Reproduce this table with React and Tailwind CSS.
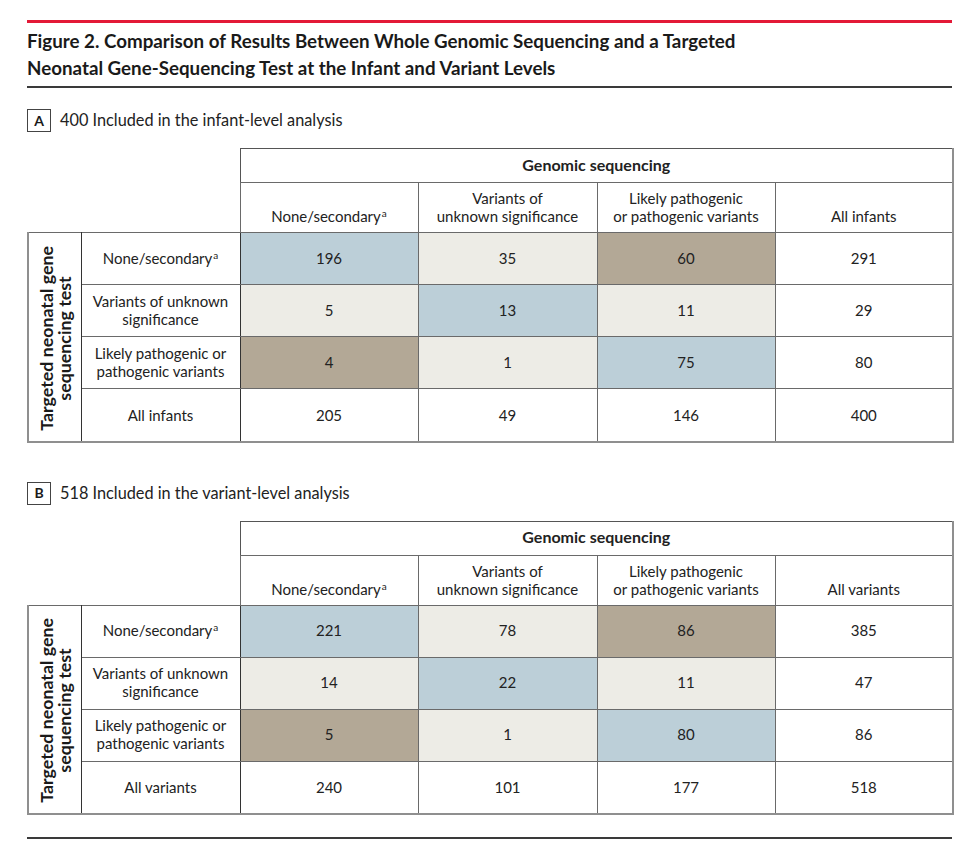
import React from 'react';

const FONT = { fontFamily: 'Lato, "Noto Sans", sans-serif' };

const COLORS = {
  b: 'bg-[#bccfd8]',
  l: 'bg-[#edece6]',
  t: 'bg-[#b3a896]',
  w: 'bg-white',
};

const IN = 'border border-[#6a6a6a]';

function Sup() {
  return <sup className="text-[10px] relative -top-[5px] ml-[1px] align-baseline">a</sup>;
}

function Panel({ letter, label, allLabel, rows, totals }) {
  const rowLabels = [
    <>None/secondary<Sup /></>,
    <>Variants of unknown<br />significance</>,
    <>Likely pathogenic or<br />pathogenic variants</>,
  ];
  return (
    <div>
      <div className="flex items-center h-[23px]">
        <div className="w-[24px] h-[23px] border border-[#444] flex items-center justify-center font-bold text-[14px] leading-none">
          {letter}
        </div>
        <div className="ml-[9px] text-[16.3px] leading-none text-[#222]">{label}</div>
      </div>
      <table className="mt-[16px] w-[925px] table-fixed border-collapse text-[15px] text-[#222] leading-[18px]">
        <colgroup>
          <col className="w-[53px]" />
          <col className="w-[159px]" />
          <col className="w-[178px]" />
          <col className="w-[179px]" />
          <col className="w-[178px]" />
          <col className="w-[178px]" />
        </colgroup>
        <tbody>
          <tr className="h-[34px]">
            <td colSpan={2} className="p-0"></td>
            <th
              colSpan={4}
              className="border-t border-l border-b border-t-[#555] border-l-[#555] border-b-[#6a6a6a] border-r-2 border-r-[#8f8f8f] font-bold text-[16px] text-center align-middle p-0 pb-[2px]"
            >
              Genomic sequencing
            </th>
          </tr>
          <tr className="h-[50px]">
            <td colSpan={2} className="p-0"></td>
            <th className={`${IN} font-normal text-center align-bottom pb-[7px] px-0`}>
              None/secondary<Sup />
            </th>
            <th className={`${IN} font-normal text-center align-bottom pb-[7px] px-0`}>
              Variants of<br />unknown significance
            </th>
            <th className={`${IN} font-normal text-center align-bottom pb-[7px] px-0`}>
              Likely pathogenic<br />or pathogenic variants
            </th>
            <th className={`border-t border-l border-b border-[#6a6a6a] border-r-2 border-r-[#8f8f8f] font-normal text-center align-bottom pb-[7px] px-0`}>
              {allLabel}
            </th>
          </tr>
          {rows.map((r, i) => (
            <tr key={i} className="h-[52px]">
              {i === 0 && (
                <td
                  rowSpan={4}
                  className="border-l-2 border-l-[#8f8f8f] border-b-2 border-b-[#8f8f8f] border-t border-t-[#6a6a6a] border-r border-r-[#333] p-0 pt-[6px] text-center align-middle"
                >
                  <div className="inline-block [writing-mode:vertical-rl] rotate-180 font-bold text-[17.8px] leading-[18px] text-center text-[#1a1a1a]">
                    Targeted neonatal gene<br />sequencing test
                  </div>
                </td>
              )}
              <td className={`${IN} border-r-[#333] text-center align-middle p-0 pb-[2px]`}>{rowLabels[i]}</td>
              {r.map((c, j) => (
                <td
                  key={j}
                  className={`${IN} ${COLORS[c[1]]} text-center align-middle p-0 pb-[2px]`}
                >
                  {c[0]}
                </td>
              ))}
              <td className="border-t border-l border-b border-[#6a6a6a] border-r-2 border-r-[#8f8f8f] text-center align-middle p-0 pb-[2px]">
                {totals[i]}
              </td>
            </tr>
          ))}
          <tr className="h-[53px]">
            <td className="border-t border-l border-r border-[#6a6a6a] border-r-[#333] border-b-2 border-b-[#8f8f8f] text-center align-middle p-0">
              {allLabel}
            </td>
            {totals.slice(4).map((v, j) => (
              <td
                key={j}
                className={`border-t border-l border-[#6a6a6a] border-b-2 border-b-[#8f8f8f] ${j === 3 ? 'border-r-2 border-r-[#8f8f8f]' : 'border-r border-r-[#6a6a6a]'} text-center align-middle p-0`}
              >
                {v}
              </td>
            ))}
          </tr>
        </tbody>
      </table>
    </div>
  );
}

export default function App() {
  const rowsA = [
    [['196', 'b'], ['35', 'l'], ['60', 't']],
    [['5', 'l'], ['13', 'b'], ['11', 'l']],
    [['4', 't'], ['1', 'l'], ['75', 'b']],
  ];
  const rowsB = [
    [['221', 'b'], ['78', 'l'], ['86', 't']],
    [['14', 'l'], ['22', 'b'], ['11', 'l']],
    [['5', 't'], ['1', 'l'], ['80', 'b']],
  ];
  return (
    <div className="min-h-[860px] bg-white text-[#1a1a1a]" style={FONT}>
      <div className="ml-[27px] w-[925px] pt-[20px]">
        <div className="h-[3px] bg-[#e31937]" />
        <h1 className="mt-[4px] text-[18.75px] leading-[27px] font-bold text-[#1a1a1a]">
          Figure 2. Comparison of Results Between Whole Genomic Sequencing and a Targeted
          <br />
          Neonatal Gene-Sequencing Test at the Infant and Variant Levels
        </h1>
        <div className="mt-[5px] h-[2px] bg-[#3a3a3a]" />
        <div className="mt-[21px]">
          <Panel
            letter="A"
            label="400 Included in the infant-level analysis"
            allLabel="All infants"
            rows={rowsA}
            totals={['291', '29', '80', '', '205', '49', '146', '400']}
          />
        </div>
        <div className="mt-[39px]">
          <Panel
            letter="B"
            label="518 Included in the variant-level analysis"
            allLabel="All variants"
            rows={rowsB}
            totals={['385', '47', '86', '', '240', '101', '177', '518']}
          />
        </div>
        <div className="mt-[22px] h-[2px] bg-[#3a3a3a]" />
      </div>
    </div>
  );
}
